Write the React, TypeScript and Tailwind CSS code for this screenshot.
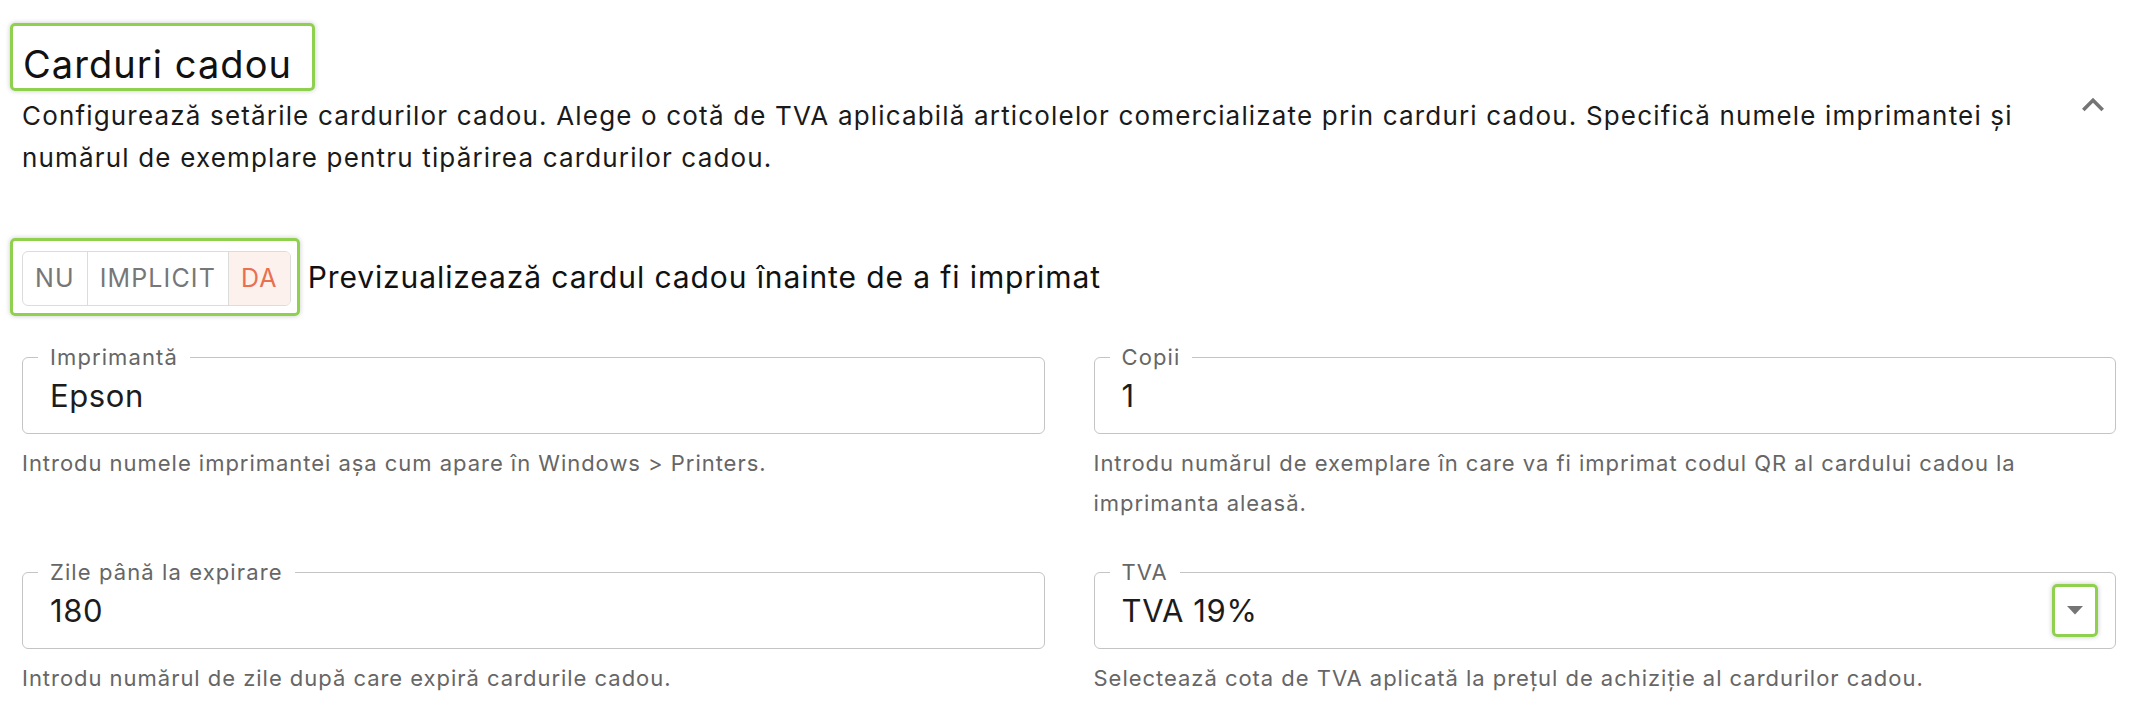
import { useState } from "react"

const green = "border-[3px] border-[#8fd14f] rounded-[5px] shadow-[0_0_5px_rgba(0,0,0,0.22)]"

function Field({ label, value, helper, select }: { label: string; value: string; helper: string; select?: boolean }) {
  return (
    <div>
      <fieldset className="rounded-[6px] border border-[#c4c4c4] px-[15px] pb-[11px]">
        <legend className="ml-0 px-[12px] text-[22px] leading-[24px] tracking-[0.05em] text-[#666]">{label}</legend>
        <div className="h-[53px] flex items-center justify-between pl-[12px]">
          <span className="text-[31px] leading-[40px] tracking-[0.02em] text-[#1c1c1c]">{value}</span>
          {select && (
            <div className={`w-[46px] h-[53px] mr-[2px] flex items-center justify-center ${green}`}>
              <svg width="16" height="9" viewBox="0 0 16 9">
                <path d="M0 0 L16 0 L8 8.5 Z" fill="#757575" />
              </svg>
            </div>
          )}
        </div>
      </fieldset>
      <p className="mt-[9px] text-[22px] leading-[40px] tracking-[0.044em] text-[#666]">{helper}</p>
    </div>
  )
}

export default function App() {
  const [choice, setChoice] = useState("DA")
  const opts = ["NU", "IMPLICIT", "DA"]

  return (
    <div className="min-h-screen bg-white pl-[22px] pr-[29px] pt-[23px] font-['Inter',sans-serif]">
      <div className="flex gap-[40px]">
        <div className="flex-1">
          <div className={`-ml-[12px] w-[305px] pl-[10px] pt-[15px] ${green}`}>
            <h1 className="text-[38px] leading-[47px] tracking-[0.028em] text-[#111]">Carduri cadou</h1>
          </div>
          <p className="pt-[4px] text-[26px] leading-[42px] tracking-[0.045em] text-[#1a1a1a]">
            Configurează setările cardurilor cadou. Alege o cotă de TVA aplicabilă articolelor comercializate prin carduri cadou. Specifică numele imprimantei și numărul de exemplare pentru tipărirea cardurilor cadou.
          </p>
        </div>
        <div className="pt-[60px] pr-[1px]">
          <svg width="44" height="44" viewBox="0 0 24 24">
            <path d="M12 8l-6 6 1.41 1.41L12 10.83l4.59 4.58L18 14z" fill="#757575" />
          </svg>
        </div>
      </div>

      <div className="mt-[59px] flex items-center">
        <div className={`-ml-[12px] pl-[9px] pr-[6px] pt-[10px] pb-[7px] ${green}`}>
          <div className="flex h-[55px] rounded-[6px] border border-[#dcdcdc] overflow-hidden">
            {opts.map((o, i) => (
              <button
                key={o}
                onClick={() => setChoice(o)}
                className={`px-[12px] text-[25px] tracking-[0.045em] ${i > 0 ? "border-l border-[#dcdcdc]" : ""} ${
                  choice === o ? "bg-[#fdf1ee] text-[#e8704f]" : "text-[#777]"
                }`}
              >
                {o}
              </button>
            ))}
          </div>
        </div>
        <span className="ml-[8px] text-[30px] tracking-[0.03em] text-[#111]">Previzualizează cardul cadou înainte de a fi imprimat</span>
      </div>

      <div className="mt-[29px] grid grid-cols-2 gap-x-[49px] gap-y-[37px]">
        <Field label="Imprimantă" value="Epson" helper="Introdu numele imprimantei așa cum apare în Windows > Printers." />
        <Field
          label="Copii"
          value="1"
          helper="Introdu numărul de exemplare în care va fi imprimat codul QR al cardului cadou la imprimanta aleasă."
        />
        <Field label="Zile până la expirare" value="180" helper="Introdu numărul de zile după care expiră cardurile cadou." />
        <Field label="TVA" value="TVA 19%" helper="Selectează cota de TVA aplicată la prețul de achiziție al cardurilor cadou." select />
      </div>
    </div>
  )
}
